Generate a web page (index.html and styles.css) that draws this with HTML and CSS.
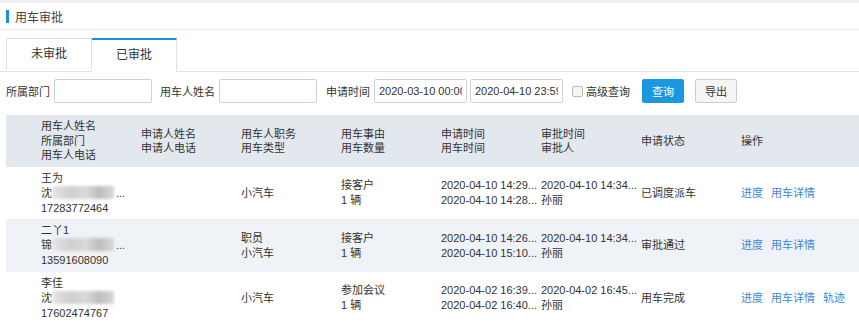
FILE: index.html
```html
<!DOCTYPE html>
<html lang="zh-CN">
<head>
    <meta charset="UTF-8">
    <title>用车审批</title>
    <link rel="stylesheet" href="styles.css">
</head>
<body>
    <div class="top-strip"></div>
    <div class="page-title"><span class="bar"></span>用车审批</div>

    <div class="tabs">
        <div class="tab">未审批</div>
        <div class="tab active">已审批</div>
    </div>

    <div class="filters">
        <label>所属部门</label>
        <input type="text" class="inp">
        <label class="gap">用车人姓名</label>
        <input type="text" class="inp">
        <label class="gap2">申请时间</label>
        <input type="text" class="inp date" value="2020-03-10 00:00:00">
        <input type="text" class="inp date" value="2020-04-10 23:59:59">
        <span class="check"></span>
        <label>高级查询</label>
        <button class="btn primary">查询</button>
        <button class="btn">导出</button>
    </div>

    <div class="table">
        <div class="row head">
            <div class="cell">用车人姓名<br>所属部门<br>用车人电话</div>
            <div class="cell">申请人姓名<br>申请人电话</div>
            <div class="cell">用车人职务<br>用车类型</div>
            <div class="cell">用车事由<br>用车数量</div>
            <div class="cell">申请时间<br>用车时间</div>
            <div class="cell">审批时间<br>审批人</div>
            <div class="cell">申请状态</div>
            <div class="cell">操作</div>
        </div>
        <div class="row">
            <div class="cell">王为<br>沈<span class="blur"></span>...<br>17283772464</div>
            <div class="cell"></div>
            <div class="cell">小汽车</div>
            <div class="cell">接客户<br>1 辆</div>
            <div class="cell">2020-04-10 14:29...<br>2020-04-10 14:28...</div>
            <div class="cell">2020-04-10 14:34...<br>孙丽</div>
            <div class="cell">已调度派车</div>
            <div class="cell ops"><a>进度</a><a>用车详情</a></div>
        </div>
        <div class="row stripe">
            <div class="cell">二丫1<br>锦<span class="blur"></span>...<br>13591608090</div>
            <div class="cell"></div>
            <div class="cell">职员<br>小汽车</div>
            <div class="cell">接客户<br>1 辆</div>
            <div class="cell">2020-04-10 14:26...<br>2020-04-10 15:10...</div>
            <div class="cell">2020-04-10 14:34...<br>孙丽</div>
            <div class="cell">审批通过</div>
            <div class="cell ops"><a>进度</a><a>用车详情</a></div>
        </div>
        <div class="row last">
            <div class="cell">李佳<br>沈<span class="blur"></span><br>17602474767</div>
            <div class="cell"></div>
            <div class="cell">小汽车</div>
            <div class="cell">参加会议<br>1 辆</div>
            <div class="cell">2020-04-02 16:39...<br>2020-04-02 16:40...</div>
            <div class="cell">2020-04-02 16:45...<br>孙丽</div>
            <div class="cell">用车完成</div>
            <div class="cell ops"><a>进度</a><a>用车详情</a><a>轨迹</a></div>
        </div>
    </div>
</body>
</html>
```

FILE: styles.css
```css
body {
    margin: 0;
    font-family: "Liberation Sans", "Noto Sans CJK SC", sans-serif;
    font-size: 11px;
    color: #333;
    background: #fff;
}

.top-strip {
    height: 3px;
    background: #eef0f3;
}

.page-title {
    display: flex;
    align-items: center;
    height: 26px;
    padding-left: 6px;
    font-size: 12px;
    color: #444;
    border-bottom: 1px solid #e8ebef;
}

.page-title .bar {
    width: 3px;
    height: 13px;
    background: #1a8fe0;
    margin-right: 6px;
}

.tabs {
    display: flex;
    margin-top: 8px;
    padding-left: 6px;
    border-bottom: 1px solid #dfe3e8;
}

.tab {
    width: 84px;
    height: 31px;
    line-height: 31px;
    text-align: center;
    font-size: 12px;
    border: 1px solid #dfe3e8;
    border-bottom: none;
    margin-bottom: -1px;
    background: #fff;
}

.tab.active {
    border-top: 2px solid #1a8fe0;
    border-left: none;
    border-bottom: 1px solid #fff;
}

.filters {
    display: flex;
    align-items: center;
    margin-top: 7px;
    padding-left: 6px;
    height: 24px;
}

.filters label {
    margin-right: 4px;
    color: #333;
}

.filters .gap {
    margin-left: 8px;
}

.filters .gap2 {
    margin-left: 9px;
    margin-right: 4px;
}

.inp {
    width: 98px;
    height: 24px;
    box-sizing: border-box;
    border: 1px solid #ccd1d8;
    border-radius: 2px;
    padding: 0 4px;
    font-family: inherit;
    font-size: 11px;
    color: #333;
}

.inp.date {
    width: 93px;
    margin-right: 3px;
}

.check {
    width: 9px;
    height: 9px;
    border: 1px solid #bbb;
    border-radius: 2px;
    background: #f4f4f4;
    margin: 0 3px 0 6px;
}

.btn {
    height: 24px;
    width: 42px;
    border: 1px solid #ccc;
    border-radius: 2px;
    background: #f5f5f5;
    font-family: inherit;
    font-size: 11px;
    color: #333;
    margin-left: 11px;
    padding: 0;
}

.btn.primary {
    background: #1a97df;
    border-color: #1a97df;
    color: #fff;
    margin-left: 8px;
}

.table {
    margin: 12px 0 0 6px;
}

.row {
    display: flex;
    align-items: center;
    height: 52px;
    border-bottom: 1px solid #eceef2;
    padding-left: 35px;
    line-height: 15px;
}

.row.head {
    background: #e3e8ee;
    border-bottom: none;
    line-height: 14.5px;
}

.row.stripe {
    background: #eff2f6;
    height: 51px;
}

.row.last {
    border-bottom: none;
}

.cell {
    width: 100px;
    flex: none;
    white-space: nowrap;
}

.blur {
    display: inline-block;
    width: 62px;
    height: 13px;
    vertical-align: -2px;
    background: linear-gradient(90deg, #e6e6e6 0, #cfcfcf 30%, #dadada 55%, #bdbdbd 75%, #d8d8d8 100%);
    filter: blur(1.5px);
    margin-right: 2px;
}

.ops a {
    color: #3d87d6;
    margin-right: 8px;
    cursor: pointer;
}
```
